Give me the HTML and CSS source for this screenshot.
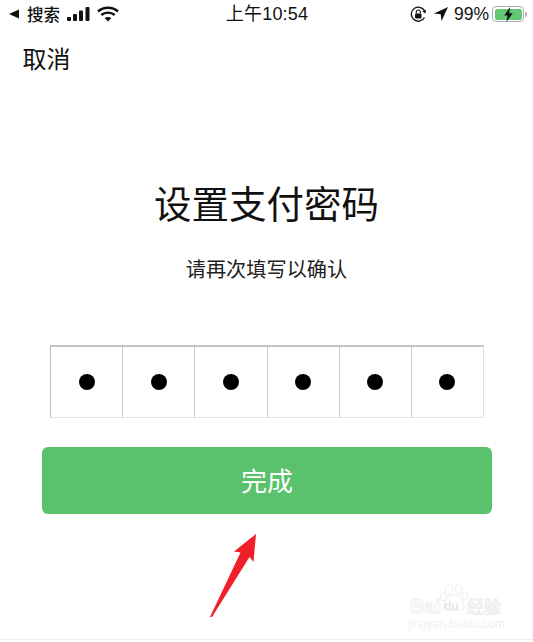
FILE: index.html
```html
<!DOCTYPE html>
<html lang="zh">
<head>
<meta charset="utf-8">
<title>设置支付密码</title>
<link rel="stylesheet" href="styles.css">
</head>
<body>
<div class="screen">
  <header class="status">
    <div class="status-side">
      <svg class="back-tri" width="10" height="10" viewBox="0 0 10 10"><path d="M0 5 10 .5v9z"/></svg>
      <span class="back-label">搜索</span>
      <svg class="signal" width="23" height="16" viewBox="0 0 23 16"><rect x="0" y="11" width="4" height="4" rx="1"/><rect x="6" y="8" width="4" height="7" rx="1"/><rect x="12" y="4.500" width="4" height="10.500" rx="1"/><rect x="18.500" y="1" width="4" height="14" rx="1"/></svg>
      <svg class="wifi" width="22" height="16" viewBox="0 0 22 16"><path d="M1 5.500C6.500.5 15.500.5 21 5.500M4.300 9C8 5.800 14 5.800 17.700 9" fill="none" stroke="#111" stroke-width="2.400"/><path d="M7.600 12C9.500 10.500 12.500 10.500 14.400 12L11 15.500z"/></svg>
    </div>
    <div class="clock">上午10:54</div>
    <div class="status-side status-right">
      <svg class="lock" width="17" height="17" viewBox="0 0 17 17"><path d="M14.500 11.500A7 7 0 1 1 15 6" fill="none" stroke="#111" stroke-width="1.400"/><path d="M15.800 3.500 15.500 7.500 12.500 5.500z"/><rect x="5" y="7.500" width="6.500" height="5" rx="1"/><path d="M6.300 7.500V6a2 2 0 0 1 4 0v1.500" fill="none" stroke="#111" stroke-width="1.100"/></svg>
      <svg class="loc" width="14" height="14" viewBox="0 0 14 14"><path d="M14 0 0 6.500 6.700 7.300 7.500 14z"/></svg>
      <span class="pct">99%</span>
      <div class="battery"><div class="battery-fill"><svg width="11" height="15" viewBox="0 0 10 14"><path d="M6.500 0 1 8h3.200L3 14 9 5.800H5.700z"/></svg></div></div>
      <div class="nub"></div>
    </div>
  </header>

  <nav class="nav"><span class="cancel">取消</span></nav>

  <h1 class="title">设置支付密码</h1>
  <p class="subtitle">请再次填写以确认</p>

  <div class="pin">
    <div class="cell"><i class="dot"></i></div>
    <div class="cell"><i class="dot"></i></div>
    <div class="cell"><i class="dot"></i></div>
    <div class="cell"><i class="dot"></i></div>
    <div class="cell"><i class="dot"></i></div>
    <div class="cell"><i class="dot"></i></div>
  </div>

  <button class="done">完成</button>

  <svg class="arrow" width="50" height="86" viewBox="0 0 50 86"><path d="M46 0 24 17.500 30.500 18.500 0 83 2 83 39.500 23 43.500 28z" fill="#f0202a"/></svg>

  <div class="mark">
    <svg class="paw" width="30" height="30" viewBox="0 0 30 30"><g fill="#fff" stroke="#eeeeee" stroke-width="1"><ellipse cx="9" cy="6" rx="3.500" ry="5"/><ellipse cx="19" cy="5" rx="3.500" ry="5"/><ellipse cx="3.500" cy="13" rx="3" ry="4"/><ellipse cx="25" cy="12" rx="3" ry="4"/><path d="M14 11c5 0 10 6 10 11 0 5-6 5-10 4-4 1-10 1-10-4 0-5 5-11 10-11z"/></g></svg>
    <div class="mark-row">
      <span class="mark-bai">Bai</span><span class="mark-du">du</span><span class="mark-cn">经验</span>
    </div>
    <div class="mark-url">jingyan.baidu.com</div>
  </div>
</div>
</body>
</html>
```
FILE: styles.css
```css
* { box-sizing: border-box; }
html, body { margin: 0; padding: 0; background: #fff; }
body {
  font-family: "Liberation Sans", "Noto Sans CJK SC", sans-serif;
  color: #111;
}
.screen {
  position: relative;
  width: 533px;
  height: 642px;
  overflow: hidden;
}
.status {
  height: 28px;
  padding: 0 6px 0 9px;
  display: grid;
  grid-template-columns: 1fr auto 1fr;
  align-items: center;
}
.status-side { display: flex; align-items: center; }
.status-right { justify-content: flex-end; }
.status svg { fill: #111; display: block; }
.back-label { font-size: 16.500px; margin-left: 8px; line-height: 20px; font-weight: 500; font-family: "Noto Sans CJK SC", sans-serif; }
.signal { margin-left: 7px; }
.wifi { margin-left: 7px; }
.clock { font-size: 18px; line-height: 20px; margin-left: -2px; letter-spacing: .2px; }
.loc { margin-left: 7px; }
.pct { font-size: 17.500px; margin-left: 6px; line-height: 20px; }
.battery {
  width: 32px;
  height: 16px;
  margin-left: 3px;
  padding: 1.500px;
  border: 1px solid #b0b0b0;
  border-radius: 4px;
}
.battery-fill {
  height: 100%;
  background: #62c873;
  border-radius: 2px;
  display: flex;
  justify-content: center;
  align-items: center;
}
.nub { width: 2px; height: 5px; background: #b0b0b0; margin-left: 1px; border-radius: 0 2px 2px 0; }
.nav { padding: 17px 0 0 22.500px; height: 70px; }
.cancel { font-size: 24px; line-height: 30px; display: block; }
.title {
  margin: 82px 0 0;
  text-align: center;
  font-size: 37.500px;
  font-weight: 400;
  line-height: 50px;
  color: #111;
}
.subtitle {
  margin: 25px 0 0;
  text-align: center;
  font-size: 20.200px;
  line-height: 30px;
  color: #222;
}
.pin {
  display: flex;
  width: 434px;
  height: 73px;
  margin: 60px 0 0 50px;
  border-top: 2px solid #c4c4c4;
  border-left: 1px solid #bbb;
  border-bottom: 1px solid #e4e4e4;
  border-right: 1px solid #e0e0e0;
}
.cell {
  flex: 1;
  display: flex;
  align-items: center;
  justify-content: center;
  border-left: 1px solid #c8c8c8;
}
.cell:first-child { border-left: 0; }
.dot { width: 16px; height: 16px; border-radius: 50%; background: #000; margin-top: -1px; }
.done {
  display: block;
  width: 450px;
  height: 67px;
  margin: 29px 0 0 42px;
  padding: 0 0 3px;
  border: 0;
  border-radius: 6px;
  background: #5ac16d;
  color: #fff;
  font: 26px "Noto Sans CJK SC", sans-serif;
}
.arrow { position: absolute; left: 210px; top: 534px; }
.mark {
  position: absolute;
  left: 408px;
  top: 584px;
  width: 100px;
  height: 54px;
  color: #fff;
}
.paw { position: absolute; left: 32px; top: 0; }
.mark-row {
  position: absolute;
  left: 2px;
  top: 13px;
  height: 18px;
  display: flex;
  align-items: center;
  white-space: nowrap;
}
.mark-bai { font-size: 20px; font-weight: 700; line-height: 18px; width: 32px; -webkit-text-stroke: 1px #eeeeee; }
.mark-du { font-size: 12px; font-weight: 700; line-height: 18px; width: 25px; padding-left: 2px; color: #e8e8e8; }
.mark-cn { font-size: 17px; line-height: 18px; font-family: "Noto Sans CJK SC", sans-serif; -webkit-text-stroke: 1px #eeeeee; }
.mark-url {
  position: absolute;
  left: 0;
  top: 33px;
  font-size: 12px;
  line-height: 14px;
  color: #f0f0f0;
  white-space: nowrap;
}
.screen::after {
  content: "";
  position: absolute;
  left: 0;
  right: 0;
  top: 639px;
  height: 1px;
  background: #ededed;
}
```
